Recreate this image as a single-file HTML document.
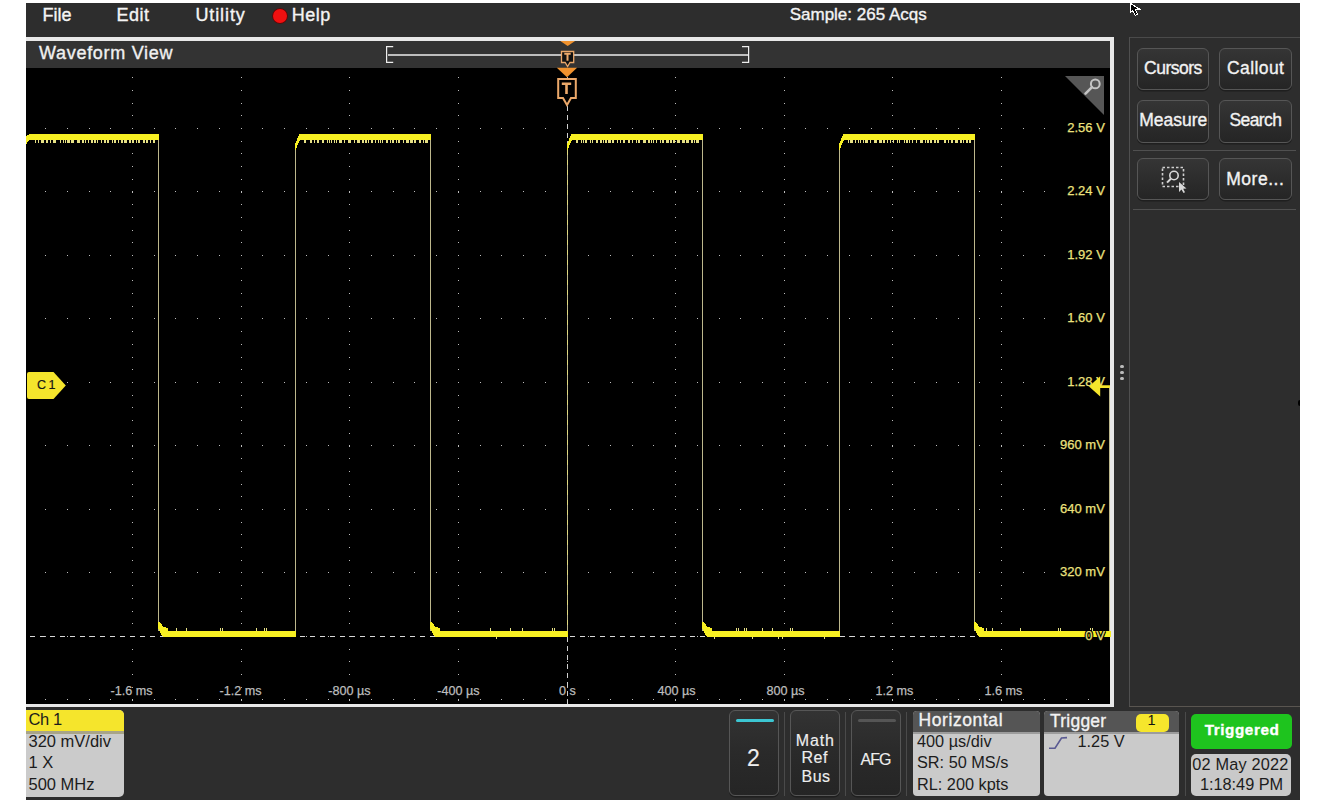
<!DOCTYPE html>
<html><head><meta charset="utf-8"><style>
html,body{margin:0;padding:0;background:#fff;width:1330px;height:808px;overflow:hidden}
*{font-family:"Liberation Sans", sans-serif}
.s{-webkit-text-stroke:0.35px currentColor}
#clip{position:absolute;left:26px;top:3px;width:1274px;height:797px;overflow:hidden;background:#2d2d2d}
#pg{position:absolute;left:-26px;top:-3px;width:1330px;height:808px}
.vl{position:absolute;font-size:13px;line-height:13px;color:#ece27e;white-space:pre;text-align:right;width:auto;letter-spacing:0px;background:#000;padding:0 0 0 3px;-webkit-text-stroke:0.25px currentColor}
.v0{background:none;text-shadow:1px 0 #000,-1px 0 #000,0 1px #000,0 -1px #000,1px 1px #000,-1px -1px #000,1px -1px #000,-1px 1px #000}
.tl{position:absolute;font-size:12.6px;line-height:13px;color:#bdbdbd;white-space:pre;text-align:center;width:80px;letter-spacing:0px;-webkit-text-stroke:0.25px currentColor;text-shadow:0 0 1.5px #000,0 0 1.5px #000,0 0 1px #000}
</style></head><body>
<div id="clip"><div id="pg">
<div class="s" style="position:absolute;left:42.50px;top:5.50px;font-size:18px;line-height:18px;color:#f4f4f4;font-weight:400;letter-spacing:0px;white-space:pre;">File</div>
<div class="s" style="position:absolute;left:116.60px;top:5.50px;font-size:18px;line-height:18px;color:#f4f4f4;font-weight:400;letter-spacing:0.5px;white-space:pre;">Edit</div>
<div class="s" style="position:absolute;left:195.40px;top:5.50px;font-size:18px;line-height:18px;color:#f4f4f4;font-weight:400;letter-spacing:0.9px;white-space:pre;">Utility</div>
<div style="position:absolute;left:272.5px;top:8.5px;width:14px;height:14px;border-radius:50%;background:#f01010;box-shadow:0 0 0 0.8px #600"></div>
<div class="s" style="position:absolute;left:291.80px;top:5.50px;font-size:18px;line-height:18px;color:#f4f4f4;font-weight:400;letter-spacing:0.5px;white-space:pre;">Help</div>
<div class="s" style="position:absolute;left:789.70px;top:6.35px;font-size:17px;line-height:17px;color:#f4f4f4;font-weight:400;letter-spacing:0px;white-space:pre;">Sample: 265 Acqs</div>
<div style="position:absolute;left:0px;top:37px;width:1114px;height:670px;background:#e8e8e8;"></div>
<div style="position:absolute;left:0px;top:41px;width:1110px;height:27px;background:#333333;"></div>
<div style="position:absolute;left:0px;top:68px;width:1110px;height:636px;background:#000000;"></div>
<div class="s" style="position:absolute;left:39.00px;top:43.50px;font-size:18px;line-height:18px;color:#f0f0f0;font-weight:400;letter-spacing:0.7px;white-space:pre;">Waveform View</div>
<div style="position:absolute;left:1129px;top:37px;width:171px;height:1px;background:#4a4a4a;"></div>
<div style="position:absolute;left:1129px;top:37px;width:1px;height:670px;background:#4f4f4f;"></div>
<div style="position:absolute;left:1129px;top:706px;width:171px;height:1px;background:#595550;"></div>
<div style="position:absolute;left:1298px;top:400px;width:2px;height:6px;background:#000;border-radius:2px 0 0 2px"></div>
<div style="position:absolute;left:1137px;top:48px;width:72px;height:42px;box-sizing:border-box;border:1.5px solid #565656;border-radius:6px;background:linear-gradient(#353535 0%,#2c2c2c 55%,#252525 100%);box-shadow:0 1.5px 0 #1f1f1f"></div>
<div style="position:absolute;left:1219px;top:48px;width:73px;height:42px;box-sizing:border-box;border:1.5px solid #565656;border-radius:6px;background:linear-gradient(#353535 0%,#2c2c2c 55%,#252525 100%);box-shadow:0 1.5px 0 #1f1f1f"></div>
<div style="position:absolute;left:1137px;top:100px;width:72px;height:43px;box-sizing:border-box;border:1.5px solid #565656;border-radius:6px;background:linear-gradient(#353535 0%,#2c2c2c 55%,#252525 100%);box-shadow:0 1.5px 0 #1f1f1f"></div>
<div style="position:absolute;left:1219px;top:100px;width:73px;height:43px;box-sizing:border-box;border:1.5px solid #565656;border-radius:6px;background:linear-gradient(#353535 0%,#2c2c2c 55%,#252525 100%);box-shadow:0 1.5px 0 #1f1f1f"></div>
<div style="position:absolute;left:1133px;top:150px;width:163px;height:1px;background:#505050;"></div>
<div style="position:absolute;left:1137px;top:158px;width:72px;height:42px;box-sizing:border-box;border:1.5px solid #565656;border-radius:6px;background:linear-gradient(#353535 0%,#2c2c2c 55%,#252525 100%);box-shadow:0 1.5px 0 #1f1f1f"></div>
<div style="position:absolute;left:1219px;top:158px;width:73px;height:42px;box-sizing:border-box;border:1.5px solid #565656;border-radius:6px;background:linear-gradient(#353535 0%,#2c2c2c 55%,#252525 100%);box-shadow:0 1.5px 0 #1f1f1f"></div>
<div style="position:absolute;left:1133px;top:209px;width:163px;height:1px;background:#505050;"></div>
<div class="s" style="position:absolute;left:1144.10px;top:59.72px;font-size:17.5px;line-height:17.5px;color:#f2f2f2;font-weight:400;letter-spacing:-0.5px;white-space:pre;">Cursors</div>
<div class="s" style="position:absolute;left:1227.00px;top:59.72px;font-size:17.5px;line-height:17.5px;color:#f2f2f2;font-weight:400;letter-spacing:0.4px;white-space:pre;">Callout</div>
<div class="s" style="position:absolute;left:1139.20px;top:111.72px;font-size:17.5px;line-height:17.5px;color:#f2f2f2;font-weight:400;letter-spacing:0px;white-space:pre;">Measure</div>
<div class="s" style="position:absolute;left:1229.50px;top:111.72px;font-size:17.5px;line-height:17.5px;color:#f2f2f2;font-weight:400;letter-spacing:-0.6px;white-space:pre;">Search</div>
<div class="s" style="position:absolute;left:1226.30px;top:170.72px;font-size:17.5px;line-height:17.5px;color:#f2f2f2;font-weight:400;letter-spacing:0.5px;white-space:pre;">More...</div>
<svg style="position:absolute;left:1158px;top:164px" width="34" height="30" viewBox="0 0 34 30">
<rect x="4.5" y="3.5" width="21" height="19" fill="none" stroke="#cfcfcf" stroke-width="1.6" stroke-dasharray="2.5 2"/>
<circle cx="16" cy="11.5" r="4.2" fill="none" stroke="#d8d8d8" stroke-width="1.6"/>
<line x1="12.8" y1="14.8" x2="9" y2="18.6" stroke="#d8d8d8" stroke-width="2"/>
<path d="M21 18 L21 28 L23.5 25.5 L25.5 29 L27 28.2 L25.2 24.8 L28.5 24.5 Z" fill="#d8d8d8"/>
</svg>
<div style="position:absolute;left:26px;top:710px;width:98px;height:87px;border-radius:0 5px 5px 0;background:#cbcbcb;overflow:hidden"><div style="position:absolute;left:0;top:0;width:98px;height:21px;background:#f5e52c"></div><div style="position:absolute;left:0;top:21px;width:98px;height:2.5px;background:#a8a488"></div></div>
<div style="position:absolute;left:28.60px;top:710.88px;font-size:16.5px;line-height:16.5px;color:#1c1c1c;font-weight:400;letter-spacing:-0.45px;white-space:pre;">Ch 1</div>
<div style="position:absolute;left:28.50px;top:732.98px;font-size:16.5px;line-height:16.5px;color:#1c1c1c;font-weight:400;letter-spacing:0px;white-space:pre;">320 mV/div</div>
<div style="position:absolute;left:28.50px;top:753.77px;font-size:16.5px;line-height:16.5px;color:#1c1c1c;font-weight:400;letter-spacing:0px;white-space:pre;">1 X</div>
<div style="position:absolute;left:28.50px;top:775.88px;font-size:16.5px;line-height:16.5px;color:#1c1c1c;font-weight:400;letter-spacing:0px;white-space:pre;">500 MHz</div>
<div style="position:absolute;left:729px;top:710px;width:50px;height:86px;box-sizing:border-box;border:1.5px solid #565656;border-radius:6px;background:linear-gradient(#333 0%,#2a2a2a 50%,#252525 100%);box-shadow:0 1.5px 0 #1f1f1f"></div>
<div style="position:absolute;left:790px;top:710px;width:50px;height:86px;box-sizing:border-box;border:1.5px solid #565656;border-radius:6px;background:linear-gradient(#333 0%,#2a2a2a 50%,#252525 100%);box-shadow:0 1.5px 0 #1f1f1f"></div>
<div style="position:absolute;left:851px;top:710px;width:50px;height:86px;box-sizing:border-box;border:1.5px solid #565656;border-radius:6px;background:linear-gradient(#333 0%,#2a2a2a 50%,#252525 100%);box-shadow:0 1.5px 0 #1f1f1f"></div>
<div style="position:absolute;left:784px;top:712px;width:1px;height:84px;background:#4a4a4a;"></div>
<div style="position:absolute;left:845px;top:712px;width:1px;height:84px;background:#4a4a4a;"></div>
<div style="position:absolute;left:906px;top:712px;width:1px;height:84px;background:#4a4a4a;"></div>
<div style="position:absolute;left:1185px;top:712px;width:1px;height:84px;background:#4a4a4a;"></div>
<div style="position:absolute;left:736px;top:719px;width:38px;height:3px;background:#3cc6d2;border-radius:1.5px"></div>
<div style="position:absolute;left:858px;top:719px;width:38px;height:3px;background:#555555;border-radius:1.5px"></div>
<div style="position:absolute;left:747.00px;top:746.95px;font-size:23px;line-height:23px;color:#eeeeee;font-weight:400;letter-spacing:0px;white-space:pre;-webkit-text-stroke:0.15px #eee">2</div>
<div style="position:absolute;left:795.70px;top:733.20px;font-size:16px;line-height:16px;color:#eeeeee;font-weight:400;letter-spacing:0.9px;white-space:pre;-webkit-text-stroke:0.15px #eee">Math</div>
<div style="position:absolute;left:801.50px;top:750.40px;font-size:16px;line-height:16px;color:#eeeeee;font-weight:400;letter-spacing:0.5px;white-space:pre;-webkit-text-stroke:0.15px #eee">Ref</div>
<div style="position:absolute;left:801.50px;top:769.20px;font-size:16px;line-height:16px;color:#eeeeee;font-weight:400;letter-spacing:0.5px;white-space:pre;-webkit-text-stroke:0.15px #eee">Bus</div>
<div style="position:absolute;left:860.60px;top:751.80px;font-size:16px;line-height:16px;color:#eeeeee;font-weight:400;letter-spacing:-1.0px;white-space:pre;-webkit-text-stroke:0.15px #eee">AFG</div>
<div style="position:absolute;left:913px;top:711px;width:127px;height:85px;border-radius:4px;background:#cacaca;overflow:hidden"><div style="position:absolute;left:0;top:0;width:100%;height:20.5px;background:#555"></div><div style="position:absolute;left:0;top:20.5px;width:100%;height:2.5px;background:#9c9c9c"></div></div>
<div style="position:absolute;left:1044px;top:711px;width:135px;height:85px;border-radius:4px;background:#cacaca;overflow:hidden"><div style="position:absolute;left:0;top:0;width:100%;height:20.5px;background:#555"></div><div style="position:absolute;left:0;top:20.5px;width:100%;height:2.5px;background:#9c9c9c"></div></div>
<div class="s" style="position:absolute;left:918.40px;top:712.12px;font-size:17.5px;line-height:17.5px;color:#f2f2f2;font-weight:400;letter-spacing:0.6px;white-space:pre;">Horizontal</div>
<div style="position:absolute;left:917.00px;top:732.94px;font-size:16.3px;line-height:16.3px;color:#1c1c1c;font-weight:400;letter-spacing:0px;white-space:pre;">400 µs/div</div>
<div style="position:absolute;left:917.00px;top:753.94px;font-size:16.3px;line-height:16.3px;color:#1c1c1c;font-weight:400;letter-spacing:0px;white-space:pre;">SR: 50 MS/s</div>
<div style="position:absolute;left:917.00px;top:776.14px;font-size:16.3px;line-height:16.3px;color:#1c1c1c;font-weight:400;letter-spacing:0px;white-space:pre;">RL: 200 kpts</div>
<div class="s" style="position:absolute;left:1049.90px;top:712.83px;font-size:17.5px;line-height:17.5px;color:#f2f2f2;font-weight:400;letter-spacing:0.25px;white-space:pre;">Trigger</div>
<div style="position:absolute;left:1136px;top:714px;width:32.5px;height:17.5px;border-radius:5px;background:#f6e62c"></div>
<div style="position:absolute;left:1147.60px;top:713.47px;font-size:14.5px;line-height:14.5px;color:#111;font-weight:400;letter-spacing:0px;white-space:pre;">1</div>
<svg style="position:absolute;left:1047px;top:735px" width="22" height="16"><path d="M2 13.3 L8 13.3 L14.5 3 L20 2.6" fill="none" stroke="#5a5a92" stroke-width="1.6"/></svg>
<div style="position:absolute;left:1077.50px;top:732.94px;font-size:16.3px;line-height:16.3px;color:#1c1c1c;font-weight:400;letter-spacing:0px;white-space:pre;">1.25 V</div>
<div style="position:absolute;left:1191px;top:713.5px;width:101px;height:35.5px;border-radius:5px;background:#1ec41e"></div>
<div class="s" style="position:absolute;left:1204.70px;top:721.89px;font-size:15.3px;line-height:15.3px;color:#ffffff;font-weight:700;letter-spacing:0.55px;white-space:pre;">Triggered</div>
<div style="position:absolute;left:1191px;top:754px;width:100px;height:42px;border-radius:5px;background:#c9c9c9"></div>
<div style="position:absolute;left:1192.20px;top:755.75px;font-size:16.3px;line-height:16.3px;color:#1c1c1c;font-weight:400;letter-spacing:0.2px;white-space:pre;">02 May 2022</div>
<div style="position:absolute;left:1199.90px;top:775.75px;font-size:16.3px;line-height:16.3px;color:#1c1c1c;font-weight:400;letter-spacing:0px;white-space:pre;">1:18:49 PM</div>
<svg style="position:absolute;left:0;top:0" width="1330" height="808" shape-rendering="crispEdges"><path d="M45 128h1v1h-1zM45 191h1v1h-1zM45 255h1v1h-1zM45 318h1v1h-1zM45 382h1v1h-1zM45 445h1v1h-1zM45 509h1v1h-1zM45 572h1v1h-1zM45 636h1v1h-1zM45 699h1v1h-1zM67 128h1v1h-1zM67 191h1v1h-1zM67 255h1v1h-1zM67 318h1v1h-1zM67 382h1v1h-1zM67 445h1v1h-1zM67 509h1v1h-1zM67 572h1v1h-1zM67 636h1v1h-1zM67 699h1v1h-1zM89 128h1v1h-1zM89 191h1v1h-1zM89 255h1v1h-1zM89 318h1v1h-1zM89 382h1v1h-1zM89 445h1v1h-1zM89 509h1v1h-1zM89 572h1v1h-1zM89 636h1v1h-1zM89 699h1v1h-1zM110 128h1v1h-1zM110 191h1v1h-1zM110 255h1v1h-1zM110 318h1v1h-1zM110 382h1v1h-1zM110 445h1v1h-1zM110 509h1v1h-1zM110 572h1v1h-1zM110 636h1v1h-1zM110 699h1v1h-1zM132 77h1v1h-1zM132 90h1v1h-1zM132 103h1v1h-1zM132 115h1v1h-1zM132 128h1v1h-1zM132 141h1v1h-1zM132 153h1v1h-1zM132 166h1v1h-1zM132 179h1v1h-1zM132 191h1v1h-1zM132 192h1v1h-1zM132 204h1v1h-1zM132 217h1v1h-1zM132 230h1v1h-1zM132 242h1v1h-1zM132 255h1v1h-1zM132 268h1v1h-1zM132 280h1v1h-1zM132 293h1v1h-1zM132 306h1v1h-1zM132 318h1v1h-1zM132 331h1v1h-1zM132 344h1v1h-1zM132 357h1v1h-1zM132 369h1v1h-1zM132 382h1v1h-1zM132 395h1v1h-1zM132 407h1v1h-1zM132 420h1v1h-1zM132 433h1v1h-1zM132 445h1v1h-1zM132 446h1v1h-1zM132 458h1v1h-1zM132 471h1v1h-1zM132 484h1v1h-1zM132 496h1v1h-1zM132 509h1v1h-1zM132 522h1v1h-1zM132 534h1v1h-1zM132 547h1v1h-1zM132 560h1v1h-1zM132 572h1v1h-1zM132 585h1v1h-1zM132 598h1v1h-1zM132 611h1v1h-1zM132 623h1v1h-1zM132 636h1v1h-1zM132 649h1v1h-1zM132 661h1v1h-1zM132 674h1v1h-1zM132 687h1v1h-1zM132 699h1v1h-1zM132 700h1v1h-1zM154 128h1v1h-1zM154 191h1v1h-1zM154 255h1v1h-1zM154 318h1v1h-1zM154 382h1v1h-1zM154 445h1v1h-1zM154 509h1v1h-1zM154 572h1v1h-1zM154 636h1v1h-1zM154 699h1v1h-1zM175 128h1v1h-1zM175 191h1v1h-1zM175 255h1v1h-1zM175 318h1v1h-1zM175 382h1v1h-1zM175 445h1v1h-1zM175 509h1v1h-1zM175 572h1v1h-1zM175 636h1v1h-1zM175 699h1v1h-1zM197 128h1v1h-1zM197 191h1v1h-1zM197 255h1v1h-1zM197 318h1v1h-1zM197 382h1v1h-1zM197 445h1v1h-1zM197 509h1v1h-1zM197 572h1v1h-1zM197 636h1v1h-1zM197 699h1v1h-1zM219 128h1v1h-1zM219 191h1v1h-1zM219 255h1v1h-1zM219 318h1v1h-1zM219 382h1v1h-1zM219 445h1v1h-1zM219 509h1v1h-1zM219 572h1v1h-1zM219 636h1v1h-1zM219 699h1v1h-1zM241 77h1v1h-1zM241 90h1v1h-1zM241 103h1v1h-1zM241 115h1v1h-1zM241 128h1v1h-1zM241 141h1v1h-1zM241 153h1v1h-1zM241 166h1v1h-1zM241 179h1v1h-1zM241 191h1v1h-1zM241 192h1v1h-1zM241 204h1v1h-1zM241 217h1v1h-1zM241 230h1v1h-1zM241 242h1v1h-1zM241 255h1v1h-1zM241 268h1v1h-1zM241 280h1v1h-1zM241 293h1v1h-1zM241 306h1v1h-1zM241 318h1v1h-1zM241 331h1v1h-1zM241 344h1v1h-1zM241 357h1v1h-1zM241 369h1v1h-1zM241 382h1v1h-1zM241 395h1v1h-1zM241 407h1v1h-1zM241 420h1v1h-1zM241 433h1v1h-1zM241 445h1v1h-1zM241 446h1v1h-1zM241 458h1v1h-1zM241 471h1v1h-1zM241 484h1v1h-1zM241 496h1v1h-1zM241 509h1v1h-1zM241 522h1v1h-1zM241 534h1v1h-1zM241 547h1v1h-1zM241 560h1v1h-1zM241 572h1v1h-1zM241 585h1v1h-1zM241 598h1v1h-1zM241 611h1v1h-1zM241 623h1v1h-1zM241 636h1v1h-1zM241 649h1v1h-1zM241 661h1v1h-1zM241 674h1v1h-1zM241 687h1v1h-1zM241 699h1v1h-1zM241 700h1v1h-1zM262 128h1v1h-1zM262 191h1v1h-1zM262 255h1v1h-1zM262 318h1v1h-1zM262 382h1v1h-1zM262 445h1v1h-1zM262 509h1v1h-1zM262 572h1v1h-1zM262 636h1v1h-1zM262 699h1v1h-1zM284 128h1v1h-1zM284 191h1v1h-1zM284 255h1v1h-1zM284 318h1v1h-1zM284 382h1v1h-1zM284 445h1v1h-1zM284 509h1v1h-1zM284 572h1v1h-1zM284 636h1v1h-1zM284 699h1v1h-1zM306 128h1v1h-1zM306 191h1v1h-1zM306 255h1v1h-1zM306 318h1v1h-1zM306 382h1v1h-1zM306 445h1v1h-1zM306 509h1v1h-1zM306 572h1v1h-1zM306 636h1v1h-1zM306 699h1v1h-1zM328 128h1v1h-1zM328 191h1v1h-1zM328 255h1v1h-1zM328 318h1v1h-1zM328 382h1v1h-1zM328 445h1v1h-1zM328 509h1v1h-1zM328 572h1v1h-1zM328 636h1v1h-1zM328 699h1v1h-1zM349 77h1v1h-1zM349 90h1v1h-1zM349 103h1v1h-1zM349 115h1v1h-1zM349 128h1v1h-1zM349 141h1v1h-1zM349 153h1v1h-1zM349 166h1v1h-1zM349 179h1v1h-1zM349 191h1v1h-1zM349 192h1v1h-1zM349 204h1v1h-1zM349 217h1v1h-1zM349 230h1v1h-1zM349 242h1v1h-1zM349 255h1v1h-1zM349 268h1v1h-1zM349 280h1v1h-1zM349 293h1v1h-1zM349 306h1v1h-1zM349 318h1v1h-1zM349 331h1v1h-1zM349 344h1v1h-1zM349 357h1v1h-1zM349 369h1v1h-1zM349 382h1v1h-1zM349 395h1v1h-1zM349 407h1v1h-1zM349 420h1v1h-1zM349 433h1v1h-1zM349 445h1v1h-1zM349 446h1v1h-1zM349 458h1v1h-1zM349 471h1v1h-1zM349 484h1v1h-1zM349 496h1v1h-1zM349 509h1v1h-1zM349 522h1v1h-1zM349 534h1v1h-1zM349 547h1v1h-1zM349 560h1v1h-1zM349 572h1v1h-1zM349 585h1v1h-1zM349 598h1v1h-1zM349 611h1v1h-1zM349 623h1v1h-1zM349 636h1v1h-1zM349 649h1v1h-1zM349 661h1v1h-1zM349 674h1v1h-1zM349 687h1v1h-1zM349 699h1v1h-1zM349 700h1v1h-1zM371 128h1v1h-1zM371 191h1v1h-1zM371 255h1v1h-1zM371 318h1v1h-1zM371 382h1v1h-1zM371 445h1v1h-1zM371 509h1v1h-1zM371 572h1v1h-1zM371 636h1v1h-1zM371 699h1v1h-1zM393 128h1v1h-1zM393 191h1v1h-1zM393 255h1v1h-1zM393 318h1v1h-1zM393 382h1v1h-1zM393 445h1v1h-1zM393 509h1v1h-1zM393 572h1v1h-1zM393 636h1v1h-1zM393 699h1v1h-1zM414 128h1v1h-1zM414 191h1v1h-1zM414 255h1v1h-1zM414 318h1v1h-1zM414 382h1v1h-1zM414 445h1v1h-1zM414 509h1v1h-1zM414 572h1v1h-1zM414 636h1v1h-1zM414 699h1v1h-1zM436 128h1v1h-1zM436 191h1v1h-1zM436 255h1v1h-1zM436 318h1v1h-1zM436 382h1v1h-1zM436 445h1v1h-1zM436 509h1v1h-1zM436 572h1v1h-1zM436 636h1v1h-1zM436 699h1v1h-1zM458 77h1v1h-1zM458 90h1v1h-1zM458 103h1v1h-1zM458 115h1v1h-1zM458 128h1v1h-1zM458 141h1v1h-1zM458 153h1v1h-1zM458 166h1v1h-1zM458 179h1v1h-1zM458 191h1v1h-1zM458 192h1v1h-1zM458 204h1v1h-1zM458 217h1v1h-1zM458 230h1v1h-1zM458 242h1v1h-1zM458 255h1v1h-1zM458 268h1v1h-1zM458 280h1v1h-1zM458 293h1v1h-1zM458 306h1v1h-1zM458 318h1v1h-1zM458 331h1v1h-1zM458 344h1v1h-1zM458 357h1v1h-1zM458 369h1v1h-1zM458 382h1v1h-1zM458 395h1v1h-1zM458 407h1v1h-1zM458 420h1v1h-1zM458 433h1v1h-1zM458 445h1v1h-1zM458 446h1v1h-1zM458 458h1v1h-1zM458 471h1v1h-1zM458 484h1v1h-1zM458 496h1v1h-1zM458 509h1v1h-1zM458 522h1v1h-1zM458 534h1v1h-1zM458 547h1v1h-1zM458 560h1v1h-1zM458 572h1v1h-1zM458 585h1v1h-1zM458 598h1v1h-1zM458 611h1v1h-1zM458 623h1v1h-1zM458 636h1v1h-1zM458 649h1v1h-1zM458 661h1v1h-1zM458 674h1v1h-1zM458 687h1v1h-1zM458 699h1v1h-1zM458 700h1v1h-1zM480 128h1v1h-1zM480 191h1v1h-1zM480 255h1v1h-1zM480 318h1v1h-1zM480 382h1v1h-1zM480 445h1v1h-1zM480 509h1v1h-1zM480 572h1v1h-1zM480 636h1v1h-1zM480 699h1v1h-1zM501 128h1v1h-1zM501 191h1v1h-1zM501 255h1v1h-1zM501 318h1v1h-1zM501 382h1v1h-1zM501 445h1v1h-1zM501 509h1v1h-1zM501 572h1v1h-1zM501 636h1v1h-1zM501 699h1v1h-1zM523 128h1v1h-1zM523 191h1v1h-1zM523 255h1v1h-1zM523 318h1v1h-1zM523 382h1v1h-1zM523 445h1v1h-1zM523 509h1v1h-1zM523 572h1v1h-1zM523 636h1v1h-1zM523 699h1v1h-1zM545 128h1v1h-1zM545 191h1v1h-1zM545 255h1v1h-1zM545 318h1v1h-1zM545 382h1v1h-1zM545 445h1v1h-1zM545 509h1v1h-1zM545 572h1v1h-1zM545 636h1v1h-1zM545 699h1v1h-1zM567 77h1v1h-1zM567 90h1v1h-1zM567 103h1v1h-1zM567 115h1v1h-1zM567 128h1v1h-1zM567 141h1v1h-1zM567 153h1v1h-1zM567 166h1v1h-1zM567 179h1v1h-1zM567 191h1v1h-1zM567 192h1v1h-1zM567 204h1v1h-1zM567 217h1v1h-1zM567 230h1v1h-1zM567 242h1v1h-1zM567 255h1v1h-1zM567 268h1v1h-1zM567 280h1v1h-1zM567 293h1v1h-1zM567 306h1v1h-1zM567 318h1v1h-1zM567 331h1v1h-1zM567 344h1v1h-1zM567 357h1v1h-1zM567 369h1v1h-1zM567 382h1v1h-1zM567 395h1v1h-1zM567 407h1v1h-1zM567 420h1v1h-1zM567 433h1v1h-1zM567 445h1v1h-1zM567 446h1v1h-1zM567 458h1v1h-1zM567 471h1v1h-1zM567 484h1v1h-1zM567 496h1v1h-1zM567 509h1v1h-1zM567 522h1v1h-1zM567 534h1v1h-1zM567 547h1v1h-1zM567 560h1v1h-1zM567 572h1v1h-1zM567 585h1v1h-1zM567 598h1v1h-1zM567 611h1v1h-1zM567 623h1v1h-1zM567 636h1v1h-1zM567 649h1v1h-1zM567 661h1v1h-1zM567 674h1v1h-1zM567 687h1v1h-1zM567 699h1v1h-1zM567 700h1v1h-1zM588 128h1v1h-1zM588 191h1v1h-1zM588 255h1v1h-1zM588 318h1v1h-1zM588 382h1v1h-1zM588 445h1v1h-1zM588 509h1v1h-1zM588 572h1v1h-1zM588 636h1v1h-1zM588 699h1v1h-1zM610 128h1v1h-1zM610 191h1v1h-1zM610 255h1v1h-1zM610 318h1v1h-1zM610 382h1v1h-1zM610 445h1v1h-1zM610 509h1v1h-1zM610 572h1v1h-1zM610 636h1v1h-1zM610 699h1v1h-1zM632 128h1v1h-1zM632 191h1v1h-1zM632 255h1v1h-1zM632 318h1v1h-1zM632 382h1v1h-1zM632 445h1v1h-1zM632 509h1v1h-1zM632 572h1v1h-1zM632 636h1v1h-1zM632 699h1v1h-1zM653 128h1v1h-1zM653 191h1v1h-1zM653 255h1v1h-1zM653 318h1v1h-1zM653 382h1v1h-1zM653 445h1v1h-1zM653 509h1v1h-1zM653 572h1v1h-1zM653 636h1v1h-1zM653 699h1v1h-1zM675 77h1v1h-1zM675 90h1v1h-1zM675 103h1v1h-1zM675 115h1v1h-1zM675 128h1v1h-1zM675 141h1v1h-1zM675 153h1v1h-1zM675 166h1v1h-1zM675 179h1v1h-1zM675 191h1v1h-1zM675 192h1v1h-1zM675 204h1v1h-1zM675 217h1v1h-1zM675 230h1v1h-1zM675 242h1v1h-1zM675 255h1v1h-1zM675 268h1v1h-1zM675 280h1v1h-1zM675 293h1v1h-1zM675 306h1v1h-1zM675 318h1v1h-1zM675 331h1v1h-1zM675 344h1v1h-1zM675 357h1v1h-1zM675 369h1v1h-1zM675 382h1v1h-1zM675 395h1v1h-1zM675 407h1v1h-1zM675 420h1v1h-1zM675 433h1v1h-1zM675 445h1v1h-1zM675 446h1v1h-1zM675 458h1v1h-1zM675 471h1v1h-1zM675 484h1v1h-1zM675 496h1v1h-1zM675 509h1v1h-1zM675 522h1v1h-1zM675 534h1v1h-1zM675 547h1v1h-1zM675 560h1v1h-1zM675 572h1v1h-1zM675 585h1v1h-1zM675 598h1v1h-1zM675 611h1v1h-1zM675 623h1v1h-1zM675 636h1v1h-1zM675 649h1v1h-1zM675 661h1v1h-1zM675 674h1v1h-1zM675 687h1v1h-1zM675 699h1v1h-1zM675 700h1v1h-1zM697 128h1v1h-1zM697 191h1v1h-1zM697 255h1v1h-1zM697 318h1v1h-1zM697 382h1v1h-1zM697 445h1v1h-1zM697 509h1v1h-1zM697 572h1v1h-1zM697 636h1v1h-1zM697 699h1v1h-1zM719 128h1v1h-1zM719 191h1v1h-1zM719 255h1v1h-1zM719 318h1v1h-1zM719 382h1v1h-1zM719 445h1v1h-1zM719 509h1v1h-1zM719 572h1v1h-1zM719 636h1v1h-1zM719 699h1v1h-1zM740 128h1v1h-1zM740 191h1v1h-1zM740 255h1v1h-1zM740 318h1v1h-1zM740 382h1v1h-1zM740 445h1v1h-1zM740 509h1v1h-1zM740 572h1v1h-1zM740 636h1v1h-1zM740 699h1v1h-1zM762 128h1v1h-1zM762 191h1v1h-1zM762 255h1v1h-1zM762 318h1v1h-1zM762 382h1v1h-1zM762 445h1v1h-1zM762 509h1v1h-1zM762 572h1v1h-1zM762 636h1v1h-1zM762 699h1v1h-1zM784 77h1v1h-1zM784 90h1v1h-1zM784 103h1v1h-1zM784 115h1v1h-1zM784 128h1v1h-1zM784 141h1v1h-1zM784 153h1v1h-1zM784 166h1v1h-1zM784 179h1v1h-1zM784 191h1v1h-1zM784 192h1v1h-1zM784 204h1v1h-1zM784 217h1v1h-1zM784 230h1v1h-1zM784 242h1v1h-1zM784 255h1v1h-1zM784 268h1v1h-1zM784 280h1v1h-1zM784 293h1v1h-1zM784 306h1v1h-1zM784 318h1v1h-1zM784 331h1v1h-1zM784 344h1v1h-1zM784 357h1v1h-1zM784 369h1v1h-1zM784 382h1v1h-1zM784 395h1v1h-1zM784 407h1v1h-1zM784 420h1v1h-1zM784 433h1v1h-1zM784 445h1v1h-1zM784 446h1v1h-1zM784 458h1v1h-1zM784 471h1v1h-1zM784 484h1v1h-1zM784 496h1v1h-1zM784 509h1v1h-1zM784 522h1v1h-1zM784 534h1v1h-1zM784 547h1v1h-1zM784 560h1v1h-1zM784 572h1v1h-1zM784 585h1v1h-1zM784 598h1v1h-1zM784 611h1v1h-1zM784 623h1v1h-1zM784 636h1v1h-1zM784 649h1v1h-1zM784 661h1v1h-1zM784 674h1v1h-1zM784 687h1v1h-1zM784 699h1v1h-1zM784 700h1v1h-1zM805 128h1v1h-1zM805 191h1v1h-1zM805 255h1v1h-1zM805 318h1v1h-1zM805 382h1v1h-1zM805 445h1v1h-1zM805 509h1v1h-1zM805 572h1v1h-1zM805 636h1v1h-1zM805 699h1v1h-1zM827 128h1v1h-1zM827 191h1v1h-1zM827 255h1v1h-1zM827 318h1v1h-1zM827 382h1v1h-1zM827 445h1v1h-1zM827 509h1v1h-1zM827 572h1v1h-1zM827 636h1v1h-1zM827 699h1v1h-1zM849 128h1v1h-1zM849 191h1v1h-1zM849 255h1v1h-1zM849 318h1v1h-1zM849 382h1v1h-1zM849 445h1v1h-1zM849 509h1v1h-1zM849 572h1v1h-1zM849 636h1v1h-1zM849 699h1v1h-1zM871 128h1v1h-1zM871 191h1v1h-1zM871 255h1v1h-1zM871 318h1v1h-1zM871 382h1v1h-1zM871 445h1v1h-1zM871 509h1v1h-1zM871 572h1v1h-1zM871 636h1v1h-1zM871 699h1v1h-1zM892 77h1v1h-1zM892 90h1v1h-1zM892 103h1v1h-1zM892 115h1v1h-1zM892 128h1v1h-1zM892 141h1v1h-1zM892 153h1v1h-1zM892 166h1v1h-1zM892 179h1v1h-1zM892 191h1v1h-1zM892 192h1v1h-1zM892 204h1v1h-1zM892 217h1v1h-1zM892 230h1v1h-1zM892 242h1v1h-1zM892 255h1v1h-1zM892 268h1v1h-1zM892 280h1v1h-1zM892 293h1v1h-1zM892 306h1v1h-1zM892 318h1v1h-1zM892 331h1v1h-1zM892 344h1v1h-1zM892 357h1v1h-1zM892 369h1v1h-1zM892 382h1v1h-1zM892 395h1v1h-1zM892 407h1v1h-1zM892 420h1v1h-1zM892 433h1v1h-1zM892 445h1v1h-1zM892 446h1v1h-1zM892 458h1v1h-1zM892 471h1v1h-1zM892 484h1v1h-1zM892 496h1v1h-1zM892 509h1v1h-1zM892 522h1v1h-1zM892 534h1v1h-1zM892 547h1v1h-1zM892 560h1v1h-1zM892 572h1v1h-1zM892 585h1v1h-1zM892 598h1v1h-1zM892 611h1v1h-1zM892 623h1v1h-1zM892 636h1v1h-1zM892 649h1v1h-1zM892 661h1v1h-1zM892 674h1v1h-1zM892 687h1v1h-1zM892 699h1v1h-1zM892 700h1v1h-1zM914 128h1v1h-1zM914 191h1v1h-1zM914 255h1v1h-1zM914 318h1v1h-1zM914 382h1v1h-1zM914 445h1v1h-1zM914 509h1v1h-1zM914 572h1v1h-1zM914 636h1v1h-1zM914 699h1v1h-1zM936 128h1v1h-1zM936 191h1v1h-1zM936 255h1v1h-1zM936 318h1v1h-1zM936 382h1v1h-1zM936 445h1v1h-1zM936 509h1v1h-1zM936 572h1v1h-1zM936 636h1v1h-1zM936 699h1v1h-1zM958 128h1v1h-1zM958 191h1v1h-1zM958 255h1v1h-1zM958 318h1v1h-1zM958 382h1v1h-1zM958 445h1v1h-1zM958 509h1v1h-1zM958 572h1v1h-1zM958 636h1v1h-1zM958 699h1v1h-1zM979 128h1v1h-1zM979 191h1v1h-1zM979 255h1v1h-1zM979 318h1v1h-1zM979 382h1v1h-1zM979 445h1v1h-1zM979 509h1v1h-1zM979 572h1v1h-1zM979 636h1v1h-1zM979 699h1v1h-1zM1001 77h1v1h-1zM1001 90h1v1h-1zM1001 103h1v1h-1zM1001 115h1v1h-1zM1001 128h1v1h-1zM1001 141h1v1h-1zM1001 153h1v1h-1zM1001 166h1v1h-1zM1001 179h1v1h-1zM1001 191h1v1h-1zM1001 192h1v1h-1zM1001 204h1v1h-1zM1001 217h1v1h-1zM1001 230h1v1h-1zM1001 242h1v1h-1zM1001 255h1v1h-1zM1001 268h1v1h-1zM1001 280h1v1h-1zM1001 293h1v1h-1zM1001 306h1v1h-1zM1001 318h1v1h-1zM1001 331h1v1h-1zM1001 344h1v1h-1zM1001 357h1v1h-1zM1001 369h1v1h-1zM1001 382h1v1h-1zM1001 395h1v1h-1zM1001 407h1v1h-1zM1001 420h1v1h-1zM1001 433h1v1h-1zM1001 445h1v1h-1zM1001 446h1v1h-1zM1001 458h1v1h-1zM1001 471h1v1h-1zM1001 484h1v1h-1zM1001 496h1v1h-1zM1001 509h1v1h-1zM1001 522h1v1h-1zM1001 534h1v1h-1zM1001 547h1v1h-1zM1001 560h1v1h-1zM1001 572h1v1h-1zM1001 585h1v1h-1zM1001 598h1v1h-1zM1001 611h1v1h-1zM1001 623h1v1h-1zM1001 636h1v1h-1zM1001 649h1v1h-1zM1001 661h1v1h-1zM1001 674h1v1h-1zM1001 687h1v1h-1zM1001 699h1v1h-1zM1001 700h1v1h-1zM1023 128h1v1h-1zM1023 191h1v1h-1zM1023 255h1v1h-1zM1023 318h1v1h-1zM1023 382h1v1h-1zM1023 445h1v1h-1zM1023 509h1v1h-1zM1023 572h1v1h-1zM1023 636h1v1h-1zM1023 699h1v1h-1zM1044 128h1v1h-1zM1044 191h1v1h-1zM1044 255h1v1h-1zM1044 318h1v1h-1zM1044 382h1v1h-1zM1044 445h1v1h-1zM1044 509h1v1h-1zM1044 572h1v1h-1zM1044 636h1v1h-1zM1044 699h1v1h-1zM1066 128h1v1h-1zM1066 191h1v1h-1zM1066 255h1v1h-1zM1066 318h1v1h-1zM1066 382h1v1h-1zM1066 445h1v1h-1zM1066 509h1v1h-1zM1066 572h1v1h-1zM1066 636h1v1h-1zM1066 699h1v1h-1zM1088 128h1v1h-1zM1088 191h1v1h-1zM1088 255h1v1h-1zM1088 318h1v1h-1zM1088 382h1v1h-1zM1088 445h1v1h-1zM1088 509h1v1h-1zM1088 572h1v1h-1zM1088 636h1v1h-1zM1088 699h1v1h-1z" fill="#bdbdbd"/><line x1="26" y1="636.5" x2="1110" y2="636.5" stroke="#d8d8d8" stroke-width="1" stroke-dasharray="5 5" stroke-dashoffset="-4"/><line x1="567.5" y1="106" x2="567.5" y2="704" stroke="#d0d0d0" stroke-width="1" stroke-dasharray="5 4"/><rect x="157.5" y="134" width="1.6" height="497" fill="#bdb78c"/><rect x="429.5" y="134" width="1.6" height="497" fill="#bdb78c"/><rect x="701.5" y="134" width="1.6" height="497" fill="#bdb78c"/><rect x="973.5" y="134" width="1.6" height="497" fill="#bdb78c"/><rect x="294.5" y="148" width="1.6" height="483" fill="#bdb78c"/><rect x="566.5" y="148" width="1.6" height="483" fill="#bdb78c"/><rect x="838.5" y="148" width="1.6" height="483" fill="#bdb78c"/><rect x="32.0" y="134" width="127.0" height="6" fill="#f7ef22"/><path d="M26 136 L30 134 L33 134 L33 140 L29 140 L26 145 Z" fill="#f7ef22"/><rect x="301.0" y="134" width="130.0" height="6" fill="#f7ef22"/><path d="M294.5 150 L294.5 145 L299.5 134 L303.0 134 L303.0 140 L300.0 140 L297.0 146 L296.2 150 Z" fill="#f7ef22"/><rect x="573.0" y="134" width="130.0" height="6" fill="#f7ef22"/><path d="M566.5 150 L566.5 145 L571.5 134 L575.0 134 L575.0 140 L572.0 140 L569.0 146 L568.2 150 Z" fill="#f7ef22"/><rect x="845.0" y="134" width="130.0" height="6" fill="#f7ef22"/><path d="M838.5 150 L838.5 145 L843.5 134 L847.0 134 L847.0 140 L844.0 140 L841.0 146 L840.2 150 Z" fill="#f7ef22"/><rect x="167.0" y="631" width="129.0" height="6" fill="#f7ef22"/><path d="M157.5 622 L159.8 622 L163.0 626.5 L168.0 628.5 L168.0 637 L164.0 637 L161.5 635 L157.5 627 Z" fill="#f7ef22"/><rect x="439.0" y="631" width="129.0" height="6" fill="#f7ef22"/><path d="M429.5 622 L431.8 622 L435.0 626.5 L440.0 628.5 L440.0 637 L436.0 637 L433.5 635 L429.5 627 Z" fill="#f7ef22"/><rect x="711.0" y="631" width="129.0" height="6" fill="#f7ef22"/><path d="M701.5 622 L703.8 622 L707.0 626.5 L712.0 628.5 L712.0 637 L708.0 637 L705.5 635 L701.5 627 Z" fill="#f7ef22"/><rect x="983.0" y="631" width="128.0" height="6" fill="#f7ef22"/><path d="M973.5 622 L975.8 622 L979.0 626.5 L984.0 628.5 L984.0 637 L980.0 637 L977.5 635 L973.5 627 Z" fill="#f7ef22"/><path d="M35 140h1v3h-1zM38 140h1v3h-1zM41 140h3v3h-3zM46 140h2v3h-2zM50 140h1v3h-1zM53 140h3v3h-3zM60 140h1v3h-1zM63 140h1v3h-1zM65 140h1v3h-1zM67 140h3v3h-3zM71 140h3v3h-3zM77 140h3v3h-3zM82 140h2v3h-2zM85 140h1v3h-1zM88 140h1v3h-1zM91 140h2v3h-2zM94 140h2v3h-2zM97 140h1v3h-1zM101 140h1v3h-1zM104 140h2v3h-2zM107 140h2v3h-2zM112 140h1v3h-1zM114 140h2v3h-2zM118 140h1v3h-1zM121 140h2v3h-2zM124 140h3v3h-3zM129 140h2v3h-2zM132 140h2v3h-2zM136 140h1v3h-1zM138 140h2v3h-2zM143 140h2v3h-2zM146 140h2v3h-2zM150 140h1v3h-1zM153 140h2v3h-2zM304 140h2v3h-2zM310 140h2v3h-2zM314 140h1v3h-1zM317 140h2v3h-2zM322 140h2v3h-2zM327 140h1v3h-1zM329 140h1v3h-1zM331 140h1v3h-1zM334 140h1v3h-1zM336 140h1v3h-1zM339 140h3v3h-3zM344 140h1v3h-1zM348 140h3v3h-3zM354 140h1v3h-1zM357 140h3v3h-3zM362 140h2v3h-2zM365 140h2v3h-2zM368 140h1v3h-1zM371 140h2v3h-2zM375 140h1v3h-1zM378 140h1v3h-1zM380 140h1v3h-1zM382 140h1v3h-1zM386 140h2v3h-2zM390 140h1v3h-1zM392 140h2v3h-2zM396 140h1v3h-1zM398 140h2v3h-2zM403 140h1v3h-1zM406 140h3v3h-3zM410 140h3v3h-3zM414 140h2v3h-2zM419 140h2v3h-2zM423 140h1v3h-1zM425 140h3v3h-3zM576 140h2v3h-2zM581 140h1v3h-1zM583 140h1v3h-1zM585 140h2v3h-2zM590 140h1v3h-1zM592 140h1v3h-1zM596 140h2v3h-2zM600 140h2v3h-2zM603 140h1v3h-1zM605 140h2v3h-2zM608 140h3v3h-3zM612 140h2v3h-2zM617 140h1v3h-1zM620 140h1v3h-1zM623 140h2v3h-2zM628 140h2v3h-2zM632 140h1v3h-1zM636 140h1v3h-1zM638 140h2v3h-2zM643 140h3v3h-3zM648 140h2v3h-2zM651 140h1v3h-1zM653 140h1v3h-1zM656 140h1v3h-1zM660 140h1v3h-1zM662 140h2v3h-2zM666 140h3v3h-3zM670 140h2v3h-2zM673 140h2v3h-2zM677 140h3v3h-3zM682 140h3v3h-3zM686 140h3v3h-3zM691 140h2v3h-2zM694 140h1v3h-1zM696 140h3v3h-3zM848 140h1v3h-1zM850 140h3v3h-3zM855 140h1v3h-1zM858 140h1v3h-1zM860 140h1v3h-1zM863 140h1v3h-1zM865 140h3v3h-3zM870 140h1v3h-1zM874 140h3v3h-3zM879 140h3v3h-3zM883 140h2v3h-2zM887 140h1v3h-1zM890 140h1v3h-1zM893 140h1v3h-1zM897 140h1v3h-1zM899 140h1v3h-1zM904 140h1v3h-1zM906 140h2v3h-2zM909 140h1v3h-1zM912 140h1v3h-1zM916 140h1v3h-1zM920 140h3v3h-3zM925 140h1v3h-1zM927 140h2v3h-2zM930 140h2v3h-2zM934 140h2v3h-2zM937 140h2v3h-2zM944 140h2v3h-2zM948 140h1v3h-1zM951 140h2v3h-2zM955 140h3v3h-3zM960 140h2v3h-2zM963 140h1v3h-1zM966 140h2v3h-2zM969 140h2v3h-2zM176 628h1v3h-1zM186 628h1v3h-1zM220 628h1v3h-1zM222 628h1v3h-1zM256 628h1v3h-1zM264 628h1v3h-1zM266 628h1v3h-1zM490 628h1v3h-1zM496 637h1v2h-1zM510 628h1v3h-1zM522 628h1v3h-1zM552 628h1v3h-1zM554 628h1v3h-1zM714 637h1v2h-1zM736 628h1v3h-1zM738 628h1v3h-1zM744 628h1v3h-1zM746 628h1v3h-1zM752 637h1v2h-1zM762 628h1v3h-1zM772 628h1v3h-1zM778 637h1v2h-1zM782 637h1v2h-1zM790 628h1v3h-1zM792 628h1v3h-1zM824 637h1v2h-1zM986 628h1v3h-1zM992 628h1v3h-1zM1020 628h1v3h-1zM1058 628h1v3h-1zM1060 628h1v3h-1zM1090 628h1v3h-1zM1092 628h1v3h-1z" fill="#e6e084"/><line x1="567.5" y1="150" x2="567.5" y2="630" stroke="#e2da80" stroke-width="1.2" stroke-dasharray="5 5"/><rect x="1109" y="388" width="1" height="243" fill="#bdb78c"/></svg>
<div class="vl" style="right:225.2px;top:121.45px">2.56 V</div>
<div class="vl" style="right:225.2px;top:184.45px">2.24 V</div>
<div class="vl" style="right:225.2px;top:248.45px">1.92 V</div>
<div class="vl" style="right:225.2px;top:311.45px">1.60 V</div>
<div class="vl" style="right:225.2px;top:375.45px">1.28 V</div>
<div class="vl" style="right:225.2px;top:438.45px">960 mV</div>
<div class="vl" style="right:225.2px;top:502.45px">640 mV</div>
<div class="vl" style="right:225.2px;top:565.45px">320 mV</div>
<div class="vl v0" style="right:225.2px;top:629.45px">0 V</div>
<div class="tl" style="left:91.5px;top:684.92px">-1.6 ms</div>
<div class="tl" style="left:200.5px;top:684.92px">-1.2 ms</div>
<div class="tl" style="left:309.5px;top:684.92px">-800 µs</div>
<div class="tl" style="left:418.5px;top:684.92px">-400 µs</div>
<div class="tl" style="left:527.5px;top:684.92px">0 s</div>
<div class="tl" style="left:636.5px;top:684.92px">400 µs</div>
<div class="tl" style="left:745.5px;top:684.92px">800 µs</div>
<div class="tl" style="left:854.5px;top:684.92px">1.2 ms</div>
<div class="tl" style="left:963.5px;top:684.92px">1.6 ms</div>
<svg style="position:absolute;left:26px;top:371px" width="42" height="30"><path d="M1 3 Q1 1 3 1 L27.5 1 L39.8 14.5 L27.5 28 L3 28 Q1 28 1 26 Z" fill="#f5e52c"/></svg>
<div style="position:absolute;left:37.0px;top:378.6px;font-size:12.5px;line-height:12px;color:#161616;-webkit-text-stroke:0.2px #161616">C</div><div style="position:absolute;left:48.6px;top:378.6px;font-size:12.5px;line-height:12px;color:#161616;-webkit-text-stroke:0.2px #161616">1</div>
<svg style="position:absolute;left:1085px;top:372px" width="30" height="30"><path d="M4 14.6 L15.2 4.3 L15.2 13.3 L25 13.3 L25 16.1 L15.2 16.1 L15.2 24.5 Z" fill="#f5e52c"/></svg>
<svg style="position:absolute;left:1060px;top:72px" width="50" height="48"><path d="M5 4 L44 4 L44 43 Z" fill="#565656"/><circle cx="35.3" cy="11.9" r="4.4" fill="none" stroke="#c4c4c4" stroke-width="2"/><line x1="32" y1="15.2" x2="25.5" y2="21.7" stroke="#c4c4c4" stroke-width="2.6" stroke-linecap="round"/></svg>
<div style="position:absolute;left:1120px;top:364.5px;width:4px;height:3px;border-radius:1.5px;background:#bbbbbb"></div>
<div style="position:absolute;left:1120px;top:370.5px;width:4px;height:3px;border-radius:1.5px;background:#bbbbbb"></div>
<div style="position:absolute;left:1120px;top:376.5px;width:4px;height:3px;border-radius:1.5px;background:#bbbbbb"></div>
<svg style="position:absolute;left:380px;top:40px" width="380" height="28" shape-rendering="crispEdges"><rect x="7.5" y="14" width="361" height="2" fill="#bebebe"/><path d="M6 6h7.2v1.2h-6v14.6h6v1.2h-7.2z" fill="#eeeeee" shape-rendering="geometricPrecision"/><path d="M369.2 6h-7.2v1.2h6v14.6h-6v1.2h7.2z" fill="#eeeeee" shape-rendering="geometricPrecision"/></svg>
<svg style="position:absolute;left:550px;top:40px" width="36" height="70"><path d="M10.3 1 L25.1 1 L17.7 6 Z" fill="#f0922e"/><path d="M11.5 11.5 L23.7 11.5 L23.7 22.5 L20 22.5 L17.6 26.5 L15.2 22.5 L11.5 22.5 Z" fill="#111" stroke="#eba86a" stroke-width="1.3"/><path d="M14.3 12.8h6.4v2h-2.2v6h-2v-6h-2.2z" fill="#eba86a"/><path d="M6.8 27.7 L27.1 27.7 L17 37.2 Z" fill="#f0922e"/><path d="M8.2 39 L25.8 39 L25.8 58 L21 58 L17 65 L13 58 L8.2 58 Z" fill="#000" stroke="#eba86a" stroke-width="2"/><path d="M11.8 42.5h9.4v2.6h-3.4v8.9h-2.6v-8.9h-3.4z" fill="#eba86a"/></svg>
</div></div>
<svg style="position:absolute;left:1129px;top:2px" width="14" height="18" shape-rendering="crispEdges"><path d="M1.5 1.5 L1.5 10.2 L3.5 8.6 L6.3 13.3 L8.6 12.2 L6.2 7.6 L10.6 7.2 Z" fill="#000" stroke="#fff" stroke-width="1.1" stroke-linejoin="miter"/></svg>
</body></html>
